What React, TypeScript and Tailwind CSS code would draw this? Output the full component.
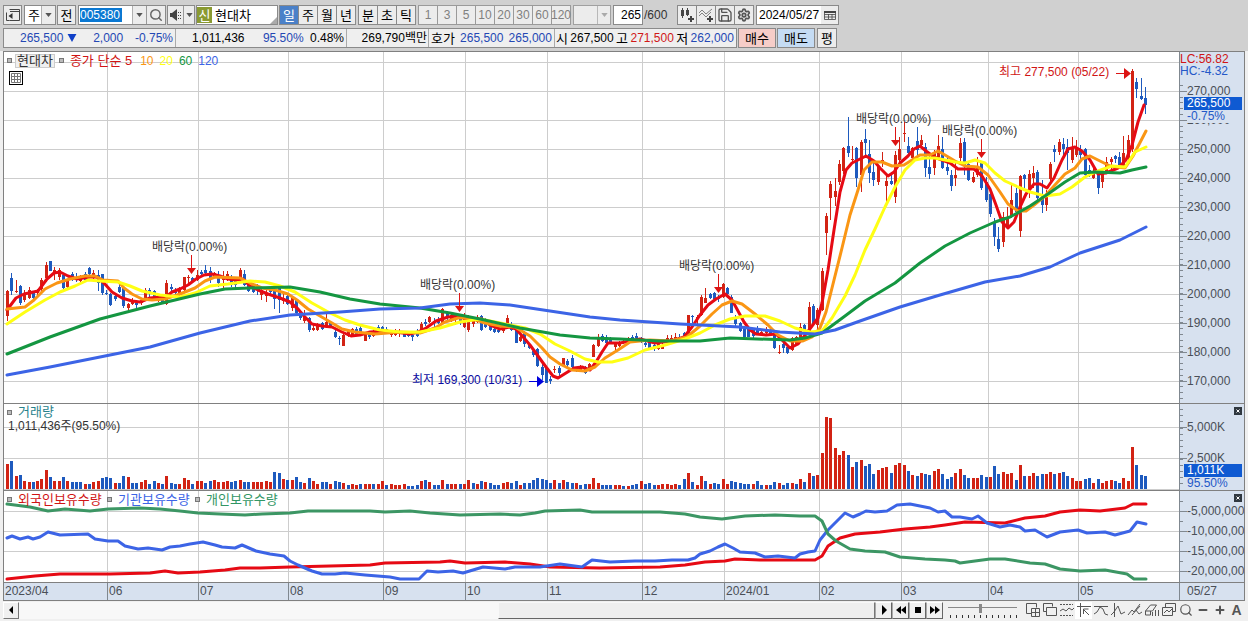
import type { ReactNode } from "react"
import { Search, Save, Settings, Minus, Plus } from "lucide-react"
import clsx from "clsx"

type Point = [number, number]
// direction (1 up, 0 down), high, body top, body bottom, low
type Candle = [number, number, number, number, number]

const RED = "#dc1414"
const CANDLE_RED = "#d22314"
const CANDLE_BLUE = "#1e5abe"
const LEFT = 4
const WIDTH = 1175
const FIRST_X = 7
const LAST_X = 1145

const months = [
  { label: "2023/04", x: 4 },
  { label: "06", x: 107 },
  { label: "07", x: 198 },
  { label: "08", x: 288 },
  { label: "09", x: 383 },
  { label: "10", x: 465 },
  { label: "11", x: 547 },
  { label: "12", x: 642 },
  { label: "2024/01", x: 724 },
  { label: "02", x: 819 },
  { label: "03", x: 901 },
  { label: "04", x: 988 },
  { label: "05", x: 1078 },
]

const priceLevels = [280, 270, 260, 250, 240, 230, 220, 210, 200, 190, 180, 170]
const priceY = (level: number) => Math.round(91 + (270 - level) * 2.895)

// positive = up day, negative = down day
const volumes = [
  25, -28, 13, -14, 8, 7, -7, 8, 10, 19, -12, 8, 8, -12, 8, -7, -7, -7, 5, -5, 7, 8, -11, -12, -11, 6, -6, -13, 12, -6,
  -6, 7, 9, -5, -8, 6, -5, 13, -6, -5, 5, 11, 9, -5, 8, 8, -6, -8, 9, 7, 7, 8, -7, -8, 9, -7, -7, 7, 7, 7, 8, 7, -17,
  -16, 10, -9, 9, -12, -7, 6, -11, 8, 5, -7, -7, 5, -8, -7, 6, -4, 5, 4, -5, 5, 5, -5, 5, 8, -4, 5, 4, 4, 5, -3, -3,
  -4, 8, -9, 7, -4, -4, 9, -5, 5, 5, -5, 5, 9, -6, 5, -8, 7, -6, -4, -4, 6, 7, -6, -8, 4, -6, -6, -9, -11, -10, -9,
  -6, 9, -6, 9, -7, -6, 6, -4, -5, 5, 11, 6, -4, -4, -4, 4, 4, -3, 3, -4, -5, 8, -5, -6, -4, 4, 5, 5, 4, 5, -4, -10,
  16, -7, 4, 13, -8, 5, -6, -5, 10, 5, -8, -7, -6, -5, -5, 5, -8, -4, 4, -4, -7, 6, -4, -6, 6, -5, 10, -7, 16, -13,
  14, 36, 72, 71, 41, 34, 38, -34, 22, -27, 29, -23, -25, -15, 19, 21, 22, -16, 24, 26, 24, -18, 14, -13, 16, -15,
  -14, 18, 20, -15, -10, -12, 16, 20, -14, -11, 11, 11, -14, -12, 12, -23, -15, 17, 15, 16, -9, 24, -13, 13, 16, -13,
  -15, 15, 17, -15, 16, -17, -13, 11, 8, 8, -10, -11, 6, -10, 6, 8, 9, -8, -6, 11, 8, 42, -24, -14, -13,
]

// candle values are thirds of a pixel below each base line
const before: Candle[] = [
  [1, 180, 183, 258, 272], [0, 130, 143, 183, 195], [1, 150, 182, 186, 190], [0, 165, 168, 218, 225],
  [1, 180, 188, 210, 215], [1, 170, 180, 205, 208], [0, 185, 190, 203, 215], [1, 176, 180, 190, 198],
  [1, 145, 150, 178, 190], [1, 97, 105, 145, 155], [0, 94, 94, 124, 124], [1, 110, 120, 130, 150],
  [1, 115, 120, 140, 150], [0, 130, 135, 175, 185], [1, 146, 150, 172, 175], [0, 125, 133, 150, 154],
  [0, 130, 142, 150, 156], [1, 135, 140, 152, 160], [0, 125, 132, 150, 154], [0, 112, 115, 132, 135],
  [1, 120, 128, 145, 148], [0, 120, 135, 158, 184], [0, 132, 133, 190, 194], [0, 180, 188, 191, 196],
  [0, 190, 193, 225, 228], [0, 195, 198, 208, 212], [0, 160, 170, 185, 190], [0, 168, 170, 228, 235],
  [1, 218, 222, 235, 250], [1, 205, 212, 222, 226], [0, 210, 220, 225, 240], [1, 210, 215, 220, 224],
  [1, 175, 180, 205, 207], [0, 175, 180, 190, 204], [0, 180, 183, 205, 212], [1, 193, 197, 212, 215],
  [0, 195, 205, 220, 223], [1, 150, 160, 222, 226], [0, 163, 172, 176, 188], [0, 175, 185, 190, 200],
  [1, 172, 180, 195, 198], [1, 140, 142, 180, 184], [1, 135, 142, 145, 160], [0, 140, 143, 155, 158],
  [1, 120, 134, 150, 154], [0, 120, 127, 132, 136], [0, 105, 120, 128, 132], [0, 110, 123, 150, 160],
  [1, 126, 130, 140, 144], [0, 122, 135, 158, 172], [1, 122, 142, 150, 180], [1, 122, 132, 150, 154],
  [0, 136, 140, 165, 172], [0, 145, 150, 165, 175], [1, 113, 120, 150, 153], [0, 120, 132, 165, 168],
  [0, 150, 155, 183, 187], [0, 160, 165, 185, 188], [0, 162, 170, 180, 195], [1, 175, 180, 195, 210],
  [1, 180, 190, 197, 215], [0, 175, 181, 186, 192], [0, 173, 178, 208, 238], [0, 165, 172, 210, 248],
  [1, 185, 205, 212, 222], [0, 194, 197, 222, 226], [1, 198, 205, 235, 242], [0, 205, 208, 250, 254],
  [0, 240, 245, 265, 270], [1, 240, 260, 272, 278], [0, 262, 265, 300, 305], [1, 280, 293, 300, 304],
  [1, 280, 285, 300, 303], [0, 276, 280, 297, 300], [1, 250, 275, 290, 294], [0, 274, 278, 292, 295],
  [0, 300, 307, 320, 325], [0, 318, 324, 328, 346], [1, 310, 315, 347, 348], [1, 298, 302, 318, 322],
  [1, 294, 298, 315, 318], [0, 290, 297, 312, 315], [0, 285, 295, 312, 315], [1, 306, 310, 332, 333],
  [0, 305, 312, 320, 328], [1, 296, 308, 318, 322], [0, 285, 290, 300, 304], [0, 288, 290, 303, 312],
  [0, 290, 297, 305, 308], [1, 300, 306, 315, 320], [1, 298, 308, 315, 318], [1, 298, 307, 312, 320],
  [0, 302, 305, 320, 322], [0, 305, 308, 318, 320], [0, 312, 316, 320, 332], [0, 296, 310, 318, 320],
  [1, 276, 282, 302, 305], [0, 268, 275, 283, 287], [1, 258, 262, 275, 280], [0, 265, 272, 276, 290],
  [0, 260, 270, 280, 283], [1, 235, 238, 280, 284], [0, 243, 248, 265, 270], [1, 250, 255, 270, 275],
  [1, 255, 265, 270, 284], [0, 258, 262, 278, 285], [1, 250, 255, 290, 293], [1, 256, 260, 300, 305],
  [1, 262, 265, 282, 290], [1, 255, 260, 275, 278], [0, 255, 257, 300, 303], [0, 265, 270, 290, 293],
  [0, 280, 285, 300, 303], [0, 290, 297, 305, 309], [0, 294, 300, 305, 310], [1, 286, 290, 302, 310],
  [1, 255, 265, 290, 292], [0, 276, 282, 300, 303], [0, 295, 298, 338, 340], [1, 315, 320, 332, 335],
  [0, 302, 310, 343, 350], [0, 340, 343, 353, 356], [0, 356, 362, 375, 382], [0, 355, 358, 408, 412],
  [0, 400, 412, 434, 450], [0, 412, 415, 458, 460], [0, 438, 448, 452, 462], [1, 408, 416, 420, 430],
  [0, 408, 415, 428, 440], [1, 383, 385, 408, 412], [0, 388, 392, 405, 412], [0, 375, 383, 412, 418],
  [0, 410, 415, 423, 426], [1, 404, 408, 423, 426], [0, 408, 412, 428, 432], [1, 398, 402, 415, 420],
  [1, 342, 345, 380, 382], [1, 312, 328, 348, 350], [0, 312, 318, 332, 336], [0, 315, 322, 338, 342],
  [0, 320, 325, 335, 342], [1, 336, 340, 352, 360], [1, 332, 336, 348, 350], [1, 326, 332, 340, 343],
  [1, 322, 328, 338, 342], [0, 314, 320, 330, 335], [0, 310, 318, 325, 335], [0, 322, 325, 335, 340],
  [0, 330, 338, 345, 350], [0, 330, 335, 355, 357], [0, 342, 345, 356, 362], [1, 340, 343, 358, 360],
  [1, 335, 345, 356, 358], [1, 316, 325, 335, 340], [1, 316, 325, 330, 338], [1, 310, 320, 330, 335],
  [0, 312, 320, 330, 335], [0, 305, 308, 325, 328], [1, 254, 256, 318, 320], [0, 254, 258, 262, 280],
  [1, 254, 260, 268, 285], [1, 195, 200, 256, 258], [1, 175, 205, 218, 220], [0, 188, 192, 203, 207],
  [0, 186, 190, 207, 212], [0, 195, 202, 206, 216], [1, 160, 163, 200, 204], [0, 170, 174, 192, 200],
  [0, 196, 200, 248, 250], [0, 255, 260, 282, 288], [0, 276, 280, 303, 306], [0, 288, 292, 320, 322],
  [0, 290, 294, 320, 322], [0, 295, 300, 318, 324], [0, 288, 298, 312, 315], [1, 296, 305, 315, 318],
  [1, 290, 296, 308, 312], [0, 295, 300, 312, 316], [0, 308, 312, 353, 358], [1, 345, 366, 368, 372],
  [0, 335, 342, 353, 368], [0, 345, 350, 370, 373], [1, 322, 325, 360, 362], [1, 318, 322, 345, 348],
  [1, 278, 290, 330, 333], [0, 282, 285, 303, 306], [1, 216, 230, 305, 308], [0, 222, 227, 283, 288],
  [1, 235, 240, 285, 298], [1, 114, 122, 240, 242],
]

const after: Candle[] = [
  [1, 460, 467, 518, 585], [1, 362, 372, 413, 480], [1, 355, 392, 410, 438], [1, 300, 312, 365, 375],
  [1, 262, 265, 332, 342], [0, 172, 258, 278, 290], [1, 258, 298, 301, 310], [0, 262, 265, 355, 380],
  [1, 240, 245, 345, 395], [0, 208, 237, 248, 285], [0, 240, 282, 340, 370], [0, 310, 335, 360, 377],
  [1, 315, 322, 365, 375], [1, 275, 300, 304, 320], [1, 345, 362, 377, 430], [0, 345, 362, 371, 376],
  [1, 272, 285, 410, 430], [1, 230, 267, 300, 318], [1, 185, 218, 221, 245], [0, 230, 257, 280, 290],
  [1, 260, 265, 295, 305], [0, 200, 243, 270, 290], [1, 225, 240, 255, 258], [0, 250, 260, 325, 352],
  [0, 285, 322, 342, 356], [1, 270, 280, 325, 345], [1, 225, 257, 290, 300], [0, 230, 268, 325, 328],
  [0, 290, 322, 333, 345], [0, 330, 345, 378, 392], [1, 310, 345, 355, 378], [1, 235, 250, 295, 310],
  [0, 235, 247, 318, 345], [0, 305, 313, 360, 363], [1, 335, 352, 366, 370], [1, 290, 318, 345, 352],
  [0, 303, 305, 383, 390], [0, 350, 365, 420, 425], [0, 396, 403, 463, 470], [0, 475, 485, 530, 558],
  [0, 500, 538, 567, 577], [1, 455, 470, 545, 560], [1, 440, 475, 500, 505], [1, 375, 420, 468, 475],
  [0, 385, 400, 455, 460], [1, 345, 347, 512, 530], [0, 342, 345, 358, 385], [1, 330, 342, 390, 415],
  [1, 318, 338, 355, 385], [0, 330, 337, 413, 420], [0, 360, 405, 435, 460], [1, 390, 402, 435, 452],
  [1, 305, 312, 357, 362], [0, 255, 267, 275, 305], [1, 238, 247, 275, 285], [0, 235, 253, 268, 290],
  [0, 238, 262, 278, 330], [1, 230, 262, 300, 310], [1, 240, 265, 285, 290], [0, 255, 268, 285, 300],
  [0, 265, 268, 345, 350], [0, 315, 330, 345, 350], [1, 320, 337, 355, 358], [0, 335, 345, 383, 402],
  [1, 330, 340, 365, 383], [1, 290, 305, 335, 340], [1, 290, 298, 306, 335], [0, 285, 288, 296, 310],
  [0, 275, 292, 322, 325], [1, 228, 280, 320, 325], [1, 225, 240, 295, 300], [1, 28, 33, 268, 275],
  [0, 55, 65, 88, 115], [0, 55, 107, 117, 120], [0, 82, 115, 135, 163],
]

const candles = [
  ...before.map(([up, ...ys]) => ({ up: up === 1, ys: ys.map((y) => Math.round(230 + y / 3)) })),
  ...after.map(([up, ...ys]) => ({ up: up === 1, ys: ys.map((y) => Math.round(60 + y / 3)) })),
]

const ma5: Point[] = [
  [7, 310], [16, 298], [24, 294], [38, 291], [47, 279], [54, 273], [60, 272], [68, 276], [77, 279], [90, 277], [97, 277],
  [104, 283], [112, 292], [122, 298], [132, 301], [140, 302], [150, 298], [160, 297], [166, 297], [172, 292], [180, 289],
  [188, 285], [196, 279], [204, 275], [212, 274], [220, 276], [228, 279], [236, 280], [243, 279], [250, 286], [258, 290],
  [268, 294], [280, 298], [290, 302], [298, 309], [304, 316], [312, 324], [322, 326], [332, 327], [342, 332], [351, 336],
  [360, 335], [370, 332], [384, 331], [395, 332], [410, 334], [418, 332], [426, 328], [436, 321], [448, 317], [458, 316],
  [470, 320], [482, 319], [490, 325], [500, 329], [510, 327], [516, 329], [524, 338], [530, 345], [538, 356], [546, 367],
  [553, 376], [558, 378], [566, 373], [574, 368], [582, 367], [590, 370], [596, 362], [602, 352], [608, 343], [620, 343],
  [640, 339], [655, 343], [672, 341], [684, 337], [692, 327], [700, 315], [708, 305], [716, 299], [725, 294], [732, 300],
  [738, 311], [744, 322], [750, 330], [756, 334], [766, 335], [776, 334], [782, 340], [790, 348], [798, 344], [806, 334],
  [812, 326], [818, 318], [822, 303], [828, 270], [834, 230], [840, 192], [846, 170], [852, 163], [858, 160], [866, 156],
  [874, 161], [880, 168], [888, 176], [894, 172], [900, 163], [908, 156], [914, 149], [920, 146], [926, 151], [934, 157],
  [942, 160], [950, 163], [958, 169], [974, 169], [982, 176], [990, 189], [996, 205], [1002, 222], [1008, 228],
  [1014, 222], [1020, 207], [1026, 194], [1034, 184], [1040, 184], [1047, 188], [1054, 178], [1062, 160], [1068, 149],
  [1075, 147], [1082, 151], [1090, 160], [1098, 174], [1106, 173], [1118, 168], [1126, 160], [1132, 145], [1138, 122],
  [1144, 105],
]
const ma10: Point[] = [
  [7, 309], [25, 307], [34, 300], [45, 289], [57, 283], [70, 279], [85, 276], [95, 276], [103, 280], [118, 281],
  [124, 288], [132, 294], [142, 299], [152, 300], [165, 299], [180, 294], [195, 288], [205, 281], [215, 277], [240, 278],
  [250, 283], [262, 288], [275, 290], [288, 294], [297, 300], [308, 309], [320, 316], [332, 323], [342, 329], [355, 332],
  [375, 334], [400, 332], [420, 333], [435, 328], [445, 322], [458, 318], [470, 318], [485, 323], [500, 326], [515, 327],
  [530, 336], [542, 348], [550, 357], [560, 364], [572, 370], [585, 371], [595, 367], [605, 358], [618, 350], [630, 342],
  [650, 340], [670, 341], [687, 337], [700, 326], [712, 314], [722, 305], [732, 301], [742, 304], [755, 314], [768, 325],
  [778, 335], [790, 341], [803, 341], [812, 337], [820, 328], [826, 312], [834, 280], [842, 248], [850, 215], [858, 190],
  [864, 170], [872, 162], [882, 162], [892, 166], [904, 165], [912, 160], [920, 155], [930, 155], [938, 151], [945, 155],
  [955, 161], [965, 166], [978, 167], [988, 175], [1000, 192], [1008, 204], [1018, 211], [1026, 211], [1034, 205],
  [1045, 196], [1054, 186], [1065, 174], [1075, 168], [1082, 159], [1090, 156], [1100, 161], [1110, 166], [1125, 168],
  [1133, 156], [1146, 131],
]
const ma20: Point[] = [
  [7, 324], [25, 312], [45, 300], [60, 292], [75, 286], [88, 280], [100, 281], [118, 282], [130, 286], [142, 291],
  [160, 295], [180, 297], [195, 293], [210, 286], [228, 284], [250, 281], [265, 282], [280, 286], [295, 292], [312, 303],
  [330, 313], [345, 320], [360, 325], [380, 330], [400, 332], [420, 332], [440, 328], [460, 322], [480, 319], [505, 324],
  [525, 328], [540, 334], [555, 344], [570, 351], [585, 359], [598, 362], [612, 362], [628, 358], [645, 350], [665, 345],
  [685, 339], [700, 333], [715, 325], [730, 319], [745, 316], [765, 316], [780, 321], [795, 328], [810, 332], [822, 331],
  [832, 318], [845, 296], [855, 275], [865, 250], [875, 229], [885, 207], [895, 187], [905, 170], [915, 160], [925, 158],
  [935, 158], [945, 160], [955, 162], [965, 163], [975, 160], [985, 163], [995, 173], [1005, 181], [1018, 187],
  [1030, 192], [1045, 196], [1060, 194], [1072, 187], [1085, 177], [1098, 171], [1112, 166], [1125, 167], [1135, 152],
  [1146, 147],
]
const ma60: Point[] = [
  [7, 354], [50, 337], [100, 319], [150, 306], [200, 294], [225, 289], [250, 288], [290, 287], [320, 292], [350, 299],
  [380, 304], [420, 308], [450, 313], [480, 319], [520, 328], [560, 335], [590, 338], [620, 339], [660, 341], [700, 341],
  [730, 338], [790, 340], [805, 338], [822, 333], [845, 316], [865, 301], [895, 283], [920, 263], [945, 246], [970, 233],
  [995, 222], [1010, 217], [1030, 206], [1048, 194], [1065, 182], [1080, 173], [1095, 172], [1120, 173], [1132, 170],
  [1146, 167],
]
const ma120: Point[] = [
  [7, 375], [50, 367], [100, 357], [150, 347], [200, 333], [250, 321], [290, 315], [340, 312], [380, 309], [420, 308],
  [450, 304], [480, 303], [510, 305], [550, 311], [590, 317], [620, 320], [680, 324], [740, 327], [780, 332], [815, 334],
  [835, 330], [860, 321], [900, 307], [940, 295], [985, 282], [1020, 276], [1050, 267], [1080, 253], [1120, 240],
  [1146, 227],
]

const foreignHeld: Point[] = [
  [7, 579], [35, 576], [60, 574], [110, 574], [150, 573], [165, 571], [178, 573], [200, 572], [225, 570], [240, 568],
  [260, 568], [290, 567], [330, 566], [370, 565], [385, 563], [440, 562], [450, 561], [465, 563], [505, 562], [530, 564],
  [550, 567], [600, 568], [660, 567], [685, 565], [705, 562], [725, 561], [735, 559], [760, 560], [815, 560], [822, 556],
  [828, 546], [840, 538], [855, 534], [880, 532], [905, 529], [930, 527], [945, 525], [965, 522], [1005, 523],
  [1025, 518], [1045, 516], [1060, 512], [1080, 510], [1100, 511], [1125, 508], [1133, 504], [1146, 504],
]
const institutionHeld: Point[] = [
  [7, 538], [12, 536], [20, 539], [28, 537], [33, 539], [40, 537], [48, 532], [60, 535], [88, 534], [95, 539],
  [108, 541], [118, 541], [125, 546], [138, 549], [148, 548], [162, 550], [170, 547], [180, 546], [190, 544], [203, 542],
  [215, 545], [222, 547], [235, 548], [242, 545], [256, 551], [270, 554], [284, 556], [290, 561], [298, 565], [312, 571],
  [322, 574], [335, 574], [345, 573], [365, 575], [390, 577], [400, 579], [419, 579], [427, 571], [438, 572], [453, 571],
  [463, 573], [483, 567], [505, 569], [515, 567], [540, 567], [560, 564], [582, 567], [592, 560], [610, 562], [635, 561],
  [655, 561], [672, 560], [688, 560], [695, 558], [700, 554], [710, 551], [718, 547], [725, 544], [733, 548], [740, 552],
  [755, 553], [765, 557], [778, 556], [795, 558], [800, 554], [808, 552], [815, 551], [820, 540], [828, 530], [838, 520],
  [845, 513], [853, 517], [860, 514], [866, 511], [875, 512], [887, 511], [897, 505], [910, 504], [920, 506], [930, 508],
  [938, 512], [945, 511], [952, 517], [960, 517], [972, 519], [978, 516], [987, 523], [1000, 527], [1010, 525],
  [1020, 527], [1025, 531], [1035, 530], [1047, 537], [1060, 532], [1078, 530], [1087, 533], [1105, 532], [1115, 535],
  [1130, 531], [1137, 522], [1146, 524],
]
const personalHeld: Point[] = [
  [7, 504], [30, 507], [48, 511], [65, 509], [90, 511], [108, 509], [140, 508], [160, 509], [180, 511], [198, 513],
  [220, 514], [245, 515], [262, 514], [290, 513], [308, 511], [370, 511], [385, 512], [410, 511], [430, 513], [460, 515],
  [500, 514], [520, 515], [535, 513], [545, 511], [580, 510], [592, 512], [660, 512], [685, 514], [700, 517], [722, 519],
  [745, 516], [775, 515], [800, 516], [815, 516], [822, 521], [828, 534], [836, 541], [850, 549], [865, 551], [885, 552],
  [900, 557], [925, 559], [945, 560], [955, 561], [960, 563], [975, 561], [990, 559], [1005, 559], [1030, 563],
  [1045, 564], [1060, 569], [1080, 571], [1105, 570], [1127, 574], [1134, 579], [1146, 579],
]

const notes = [
  { text: "배당락(0.00%)", x: 152, y: 247, color: "text-[#333]" },
  { text: "배당락(0.00%)", x: 420, y: 285, color: "text-[#333]" },
  { text: "배당락(0.00%)", x: 679, y: 266, color: "text-[#333]" },
  { text: "배당락(0.00%)", x: 856, y: 119, color: "text-[#333]" },
  { text: "배당락(0.00%)", x: 942, y: 131, color: "text-[#333]" },
  { text: "최고 277,500 (05/22)", x: 999, y: 72, color: "text-[#d01414]" },
  { text: "최저 169,300 (10/31)", x: 412, y: 380, color: "text-[#0a0aa0]" },
]

const dividendArrows: Point[] = [[191, 274], [459, 312], [718, 293], [895, 146], [981, 158]]

const barX = (i: number, count: number) => Math.round(FIRST_X + (i * (LAST_X - FIRST_X)) / (count - 1))
const percentX = (x: number) => `${((x - LEFT) / WIDTH) * 100}%`
const toPoints = (points: Point[]) => points.map((p) => p.join(",")).join(" ")

function Line({ points, color }: { points: Point[]; color: string }) {
  return <polyline points={toPoints(points)} fill="none" stroke={color} strokeWidth={3} strokeLinejoin="round" strokeLinecap="round" />
}

interface PlotProps {
  top: number
  height: number
  levels: number[]
  children: ReactNode
}

function Plot({ top, height, levels, children }: PlotProps) {
  return (
    <svg
      className="block h-full w-full"
      viewBox={`${LEFT} ${top} ${WIDTH} ${height}`}
      preserveAspectRatio="none"
      aria-hidden="true"
    >
      <g fill="#cdcdcd">
        {levels.map((y) => (
          <rect key={y} x={LEFT} y={y} width={WIDTH} height={1} />
        ))}
        {months.slice(1).map((m) => (
          <rect key={m.x} x={m.x} y={top} width={1} height={height} />
        ))}
      </g>
      {children}
    </svg>
  )
}

interface ScaleProps {
  top: number
  labels: { text: string; y: number }[]
  minor: number
  start: number
  end: number
  children?: ReactNode
}

function Scale({ top, labels, minor, start, end, children }: ScaleProps) {
  const ticks: number[] = []
  for (let y = start; y < end; y += minor) ticks.push(Math.round(y) - top)
  return (
    <div className="relative w-[65px] shrink-0 overflow-hidden border-l border-[#808890] bg-[#d7e1ef]">
      {ticks.map((y) => (
        <span key={y} className="absolute left-0 h-px w-[3px] bg-[#808890]" style={{ top: y }} />
      ))}
      {labels.map((l) => (
        <div key={l.text} className="absolute left-0 flex h-[14px] items-center" style={{ top: l.y - top - 7 }}>
          <span className="h-px w-[7px] bg-[#808890]" />
          <span className="whitespace-nowrap text-[12px] leading-[14px] text-[#4a4f57]">{l.text}</span>
        </div>
      ))}
      {children}
    </div>
  )
}

function CloseBox({ label }: { label: string }) {
  return (
    <button aria-label={label} className="absolute top-[3px] right-[2px] flex size-2 items-center justify-center bg-[#303840]">
      <svg viewBox="0 0 8 8" className="size-2" stroke="#fff" strokeWidth={1}>
        <path d="M2.5 2.5l3 3M5.5 2.5l-3 3" />
      </svg>
    </button>
  )
}

function Marker() {
  return <span className="size-[5px] shrink-0 border border-[#777] bg-[#bbb]" />
}

function Caret({ muted = false }: { muted?: boolean }) {
  return (
    <svg viewBox="0 0 8 5" className={clsx("pointer-events-none h-[4px] w-[7px]", muted ? "fill-[#aaa]" : "fill-[#555]")}>
      <path d="M0 0h8L4 5z" />
    </svg>
  )
}

interface ToolButtonProps {
  children: ReactNode
  label?: string
  className?: string
}

function ToolButton({ children, label, className }: ToolButtonProps) {
  return (
    <button
      aria-label={label}
      className={clsx("flex h-5 shrink-0 items-center justify-center border border-[#8a8a8a] text-[13px] leading-none", className)}
    >
      {children}
    </button>
  )
}

function Toolbar() {
  return (
    <div className="flex h-5 items-center">
      <ToolButton label="창 열기" className="w-[19px] bg-[#ececec]">
        <svg viewBox="0 0 16 16" className="size-4" fill="none" stroke="#444">
          <path d="M4.5 2.5h10v11h-10M5 4.5h9" />
          <path d="M1.5 5.5v8h3" />
          <path d="M7.5 6v6L3.5 9z" fill="#333" stroke="none" />
        </svg>
      </ToolButton>
      <div className="relative ml-[2px] flex h-5 w-8 border border-[#8a8a8a] bg-white">
        <select aria-label="구분" className="w-full appearance-none bg-transparent pl-[3px] text-[13px] leading-none outline-none">
          <option>주</option>
        </select>
        <span className="pointer-events-none absolute top-0 right-0 flex h-full w-[14px] items-center justify-center border-l border-[#b0b0b0] bg-[#ececec]">
          <Caret />
        </span>
      </div>
      <ToolButton className="ml-px w-[19px] bg-[#ececec]">전</ToolButton>

      <div className="ml-[2px] flex h-5 w-[88px] border border-[#8a8a8a] bg-white">
        <div className="flex w-[53px] items-center pl-px">
          <input
            aria-label="종목코드"
            defaultValue="005380"
            className="h-[14px] w-[42px] bg-[#0a78d2] text-[12px] leading-[14px] text-white outline-none"
          />
        </div>
        <button aria-label="종목 목록" className="flex w-[14px] items-center justify-center border-l border-[#b0b0b0] bg-[#ececec]">
          <Caret />
        </button>
        <button aria-label="종목 검색" className="flex w-[19px] items-center justify-center border-l border-[#999] bg-[#ececec]">
          <Search className="size-[14px] shrink-0 text-[#666]" strokeWidth={2.5} />
        </button>
      </div>

      <div className="ml-px flex h-5 w-7 border border-[#8a8a8a] bg-[#ececec]">
        <button aria-label="소리" className="flex w-4 items-center justify-center">
          <svg viewBox="0 0 14 14" className="size-[14px]" fill="#444">
            <path d="M1 5h2l5-4v12L3 9H1z" />
            <path d="M9 4h1v1H9zM9 7h1v1H9zM9 10h1v1H9zM11 4h1v1h-1zM11 7h1v1h-1zM11 10h1v1h-1z" />
          </svg>
        </button>
        <button aria-label="소리 설정" className="flex w-[11px] items-center justify-center border-l border-[#999]">
          <Caret />
        </button>
      </div>

      <div className="relative ml-px flex h-5 w-[82px] items-center border border-[#8a8a8a] bg-white">
        <span className="flex h-4 w-[15px] items-center justify-center bg-[#8a9a32] text-[13px] leading-none text-white">신</span>
        <span className="pl-[3px] text-[13px] leading-none">현대차</span>
        <span className="absolute right-0 bottom-0 border-b-[7px] border-l-[7px] border-b-[#aaa] border-l-transparent" />
      </div>

      <div className="ml-px flex">
        {["일", "주", "월", "년"].map((t, i) => (
          <ToolButton key={t} className={clsx("-mr-px w-5", i === 0 ? "bg-[#4a80c8] text-white" : "bg-[#ececec]")}>
            {t}
          </ToolButton>
        ))}
      </div>
      <div className="ml-[3px] flex">
        {["분", "초", "틱"].map((t) => (
          <ToolButton key={t} className="-mr-px w-5 bg-[#ececec]">{t}</ToolButton>
        ))}
      </div>
      <div className="ml-[3px] flex">
        {["1", "3", "5", "10", "20", "30", "60", "120"].map((t) => (
          <button
            key={t}
            className="-mr-px flex h-5 w-5 items-center justify-center border border-[#9a9a9a] bg-[#ececec] text-[12px] leading-none text-[#808080]"
          >
            {t}
          </button>
        ))}
      </div>

      <div className="relative ml-[3px] h-5 w-[38px] border border-[#a0a0a0] bg-[#ececec]">
        <select aria-label="사용자 주기" disabled className="size-full appearance-none" />
        <span className="pointer-events-none absolute top-0 right-0 flex h-full w-[13px] items-center justify-center border-l border-[#b8b8b8]">
          <Caret muted />
        </span>
      </div>
      <input
        aria-label="표시 개수"
        defaultValue="265"
        className="ml-[2px] h-5 w-[30px] border border-[#8a8a8a] bg-white pr-px text-right text-[12px] outline-none"
      />
      <span className="w-[34px] pl-px text-[12px] text-[#333]">/600</span>

      <div className="flex">
        <ToolButton label="종목 추가" className="-mr-px w-5 bg-[#ececec]">
          <svg viewBox="0 0 16 16" className="size-4" fill="#444">
            <path d="M3 1h1v2h1v6H4v2H3V9H2V3h1zM8 1h1v2h1v5H9v1H8V8H7V3h1z" />
            <path d="M11 9h2v2h2v2h-2v2h-2v-2H9v-2h2z" />
          </svg>
        </ToolButton>
        <ToolButton label="지표 추가" className="-mr-px w-5 bg-[#ececec]">
          <svg viewBox="0 0 16 16" className="size-4" fill="none" stroke="#666">
            <path d="M1 6l3-3 4 4 6-5M1 9l3-3 4 4 5-5" strokeWidth={0.8} />
            <path d="M11 9h2v2h2v2h-2v2h-2v-2H9v-2h2z" fill="#444" stroke="none" />
          </svg>
        </ToolButton>
        <ToolButton label="저장" className="-mr-px w-5 bg-[#ececec]">
          <Save className="size-4 shrink-0 text-[#555]" strokeWidth={2} />
        </ToolButton>
        <ToolButton label="설정" className="w-5 bg-[#ececec]">
          <Settings className="size-[14px] shrink-0 text-[#555]" strokeWidth={3} />
        </ToolButton>
      </div>

      <div className="ml-[2px] flex h-5 w-[83px] border border-[#8a8a8a] bg-white">
        <input aria-label="기준일" defaultValue="2024/05/27" className="w-16 pl-[2px] text-[12px] outline-none" />
        <button aria-label="달력" className="flex flex-1 items-center justify-center bg-[#ececec]">
          <svg viewBox="0 0 12 10" className="h-[10px] w-3" fill="none" stroke="#444">
            <path d="M.5 1.5h11v8H.5zM.5 4.5h11M4.5 4v5M8 4v5M.5 7h11" strokeWidth={0.8} />
            <path d="M0 1h12v2H0z" fill="#444" stroke="none" />
          </svg>
        </button>
      </div>
    </div>
  )
}

function QuoteBar() {
  return (
    <div className="mt-[3px] flex h-5 items-center text-[12px] leading-none text-black">
      <div className="flex h-5 w-[734px] items-center border border-[#8a8a8a] bg-[#efefef] *:flex *:h-full *:items-center *:whitespace-nowrap">
        <div className="w-[172px] justify-between border-r border-[#aaa] pr-[2px] pl-4 text-[#2448b4]">
          <span className="flex items-center gap-1">
            265,500
            <svg viewBox="0 0 10 9" className="h-2 w-[10px] fill-[#1040c8]"><path d="M0 0h10L5 9z" /></svg>
          </span>
          <span className="pl-1">2,000</span>
          <span>-0.75%</span>
        </div>
        <div className="w-[171px] justify-between border-r border-[#aaa] pr-[2px] pl-4">
          <span>1,011,436</span>
          <span className="pl-3 text-[#2448b4]">95.50%</span>
          <span>0.48%</span>
        </div>
        <div className="w-[82px] justify-end border-r border-[#aaa] pr-px">
          <span>269,790백만</span>
        </div>
        <div className="w-[126px] justify-between border-r border-[#aaa] px-[2px] text-[#2448b4]">
          <span className="text-[13px] text-black">호가</span>
          <span>265,500</span>
          <span>265,000</span>
        </div>
        <div className="flex-1 justify-between pr-[2px] pl-px">
          <span className="text-[13px]">시</span>
          <span>267,500</span>
          <span className="text-[13px]">고</span>
          <span className="text-[#d01818]">271,500</span>
          <span className="text-[13px]">저</span>
          <span className="text-[#2448b4]">262,000</span>
        </div>
      </div>
      <ToolButton className="ml-px w-[38px] bg-[#f6cdc8]">매수</ToolButton>
      <ToolButton className="ml-px w-[38px] bg-[#c5dcf4]">매도</ToolButton>
      <ToolButton className="ml-[2px] w-5 bg-[#ececec]">평</ToolButton>
    </div>
  )
}

function PricePane() {
  return (
    <div className="flex h-[352px] border-b border-[#808080]">
      <div className="relative min-w-0 flex-1">
        <Plot top={52} height={351} levels={priceLevels.map(priceY)}>
          <g shapeRendering="crispEdges">
            {candles.map(({ up, ys: [high, top, bottom, low] }, i) => {
              const x = barX(i, candles.length)
              return (
                <g key={i} fill={up ? CANDLE_RED : CANDLE_BLUE}>
                  <rect x={x} y={high} width={1} height={Math.max(low - high, 1)} />
                  <rect x={x - 1} y={top} width={3} height={Math.max(bottom - top, 1)} />
                </g>
              )
            })}
          </g>
          <Line points={ma5} color="#e60a14" />
          <Line points={ma10} color="#fa9614" />
          <Line points={ma20} color="#ffff14" />
          <Line points={ma60} color="#149641" />
          <Line points={ma120} color="#3c64e6" />
          {dividendArrows.map(([x, y]) => (
            <path key={x} d={`M${x} ${y - 19}h1v13h4l-4.5 6l-4.5-6h4z`} fill={RED} />
          ))}
          <path d="M1116 73h8v-5l7 5.5l-7 5.5v-5h-8z" fill={RED} />
          <path d="M529 381h8v-5l7 5.5l-7 5.5v-5h-8z" fill="#0000dc" />
        </Plot>
        {notes.map((n) => (
          <span
            key={n.x}
            className={clsx("absolute text-[12px] leading-[14px] whitespace-nowrap", n.color)}
            style={{ left: percentX(n.x), top: n.y - 59 }}
          >
            {n.text}
          </span>
        ))}
        <div className="absolute top-px left-[3px] flex h-[15px] items-center gap-1 text-[12px] leading-none text-[#d01414]">
          <Marker />
          <span className="-ml-px flex h-[14px] items-center border border-[#ccc] bg-[#efefef] px-px text-[13px] text-[#333]">현대차</span>
          <Marker />
          <span className="pl-[2px] text-[13px]">종가 단순 5</span>
          <span className="pl-1 text-[#fa9614]">10</span>
          <span className="pl-[2px] text-[#ffff14]">20</span>
          <span className="pl-[2px] text-[#149641]">60</span>
          <span className="pl-[2px] text-[#3c64e6]">120</span>
        </div>
        <button aria-label="표 보기" className="absolute top-[19px] left-[5px] flex size-[14px] items-center justify-center border border-black bg-white">
          <svg viewBox="0 0 10 10" className="size-[10px]" fill="none" stroke="#777">
            <path d="M.5.5h9v9h-9zM.5 3.5h9M.5 6.5h9M3.5.5v9M6.5.5v9" />
          </svg>
        </button>
      </div>
      <Scale
        top={52}
        minor={5.79}
        start={85}
        end={400}
        labels={priceLevels.slice(1).map((p) => ({ text: `${p},000`, y: priceY(p) }))}
      >
        <div className="absolute top-px left-0 text-[12px] leading-[12px]">
          <div className="text-[#d01414]">LC:56.82</div>
          <div className="text-[#2458c8]">HC:-4.32</div>
        </div>
        <div className="absolute top-[45px] right-[2px] left-[4px] bg-[#0f5ad2] pl-[3px] text-[12px] leading-[13px] text-white">265,500</div>
        <div className="absolute top-[58px] left-[7px] w-[50px] bg-[#d7e1ef] text-[12px] leading-[13px] text-[#2458c8]">-0.75%</div>
      </Scale>
    </div>
  )
}

function VolumePane() {
  return (
    <div className="flex h-[87px] border-b border-[#808080]">
      <div className="relative min-w-0 flex-1">
        <Plot top={404} height={86} levels={[427, 458, 489]}>
          <g shapeRendering="crispEdges">
            {volumes.map((v, i) => (
              <rect
                key={i}
                x={barX(i, volumes.length) - 1}
                y={489 - Math.abs(v)}
                width={3}
                height={Math.abs(v)}
                fill={v > 0 ? CANDLE_RED : CANDLE_BLUE}
              />
            ))}
          </g>
        </Plot>
        <div className="absolute top-px left-[3px] text-[12px] leading-[14px]">
          <div className="flex items-center gap-[6px] text-[13px] text-[#28828c]">
            <Marker />
            거래량
          </div>
          <div className="pl-px text-[#333]">1,011,436주(95.50%)</div>
        </div>
      </div>
      <Scale top={404} minor={6.2} start={409} end={489} labels={[{ text: "5,000K", y: 427 }, { text: "2,500K", y: 458 }]}>
        <CloseBox label="거래량 닫기" />
        <div className="absolute top-[60px] right-[2px] left-[4px] bg-[#0f5ad2] pl-[3px] text-[12px] leading-[13px] text-white">1,011K</div>
        <div className="absolute top-[73px] left-[7px] text-[12px] leading-[12px] text-[#2458c8]">95.50%</div>
      </Scale>
    </div>
  )
}

function HoldingsPane() {
  return (
    <div className="flex h-[92px] border-b border-[#808080]">
      <div className="relative min-w-0 flex-1">
        <Plot top={491} height={91} levels={[511, 531, 551, 571]}>
          <Line points={foreignHeld} color="#e60a14" />
          <Line points={institutionHeld} color="#3c64e6" />
          <Line points={personalHeld} color="#3c9664" />
        </Plot>
        <div className="absolute top-[2px] left-[3px] flex items-center text-[13px] leading-[13px]">
          <Marker />
          <span className="w-[95px] pl-[6px] text-[#d01414]">외국인보유수량</span>
          <Marker />
          <span className="w-[83px] pl-[6px] text-[#3c64e6]">기관보유수량</span>
          <Marker />
          <span className="pl-[6px] text-[#329664]">개인보유수량</span>
        </div>
      </div>
      <Scale
        top={491}
        minor={10}
        start={501}
        end={580}
        labels={[
          { text: "-5,000,000", y: 511 },
          { text: "-10,000,00", y: 531 },
          { text: "-15,000,00", y: 551 },
          { text: "-20,000,00", y: 571 },
        ]}
      >
        <CloseBox label="보유수량 닫기" />
      </Scale>
    </div>
  )
}

function DateAxis() {
  return (
    <div className="flex h-[17px] bg-[#d7e1ef] text-[12px] leading-[16px] text-[#4a4f57]">
      <div className="relative min-w-0 flex-1">
        {months.map((m, i) => (
          <span
            key={m.label}
            className={clsx("absolute top-0 h-full pl-px", i > 0 && "border-l border-[#808890]")}
            style={{ left: percentX(m.x) }}
          >
            {m.label}
          </span>
        ))}
      </div>
      <div className="w-[65px] shrink-0 border-l border-[#808890] pl-[7px]">05/27</div>
    </div>
  )
}

const playback = [
  { label: "재생", d: "M6 3l5 5-5 5z" },
  { label: "뒤로", d: "M8 4v8L3 8zM13 4v8L8 8z" },
  { label: "정지", d: "M5 5h6v6H5z" },
  { label: "앞으로", d: "M3 4v8l5-4zM8 4v8l5-4z" },
]

const drawTools = [
  { label: "창 추가", d: "M6.5 11.5h-5v-10h10v4M6.5 6.5h8v8h-8zM6.5 10.5h8M10.5 6.5v8" },
  { label: "창 겹치기", d: "M4.5 9.5h-3v-8h9v3M4.5 5.5h10v8h-10z" },
  { label: "격자", d: "M1 2.5h2m1 0h2m1 0h2m1 0h2m1 0h1M1 13.5h2m1 0h2m1 0h2m1 0h2m1 0h1M1 9l3-2 3 2 3-3 3 2 2-2" },
  { label: "십자선", d: "M4.5 1v14M1 4.5h14M7 7l6 6M7.5 12V7h5" },
  { label: "추세선", d: "M1 4.5h14M1 12l3-2 3-5 3 2 2 5 3 1" },
  { label: "수직선", d: "M4.5 1v14M1 13l3-3 4-6 3 8 4-2" },
  { label: "그리기", d: "M1 13l4-5 2 2 6-8M5 13l8-9M9 8l3 4 3-2" },
  { label: "모두 지우기", d: "M1.5 9l5-6h6l-4 6zM1.5 9v4h5V9M8.5 14v-4M11.5 14V8M14.5 14V8" },
  { label: "차트 겹치기", d: "M4.5 5v-3.500h10v8h-3M1.5 5.5h10v8h-10zM3 11l3-3 2 2 3-3" },
]

function BottomBar() {
  return (
    <div className="flex h-[18px] items-center bg-[#f0f0f0] pr-[3px]">
      <button aria-label="왼쪽으로" className="flex h-[17px] w-4 shrink-0 items-center justify-center border border-t-white border-r-[#777] border-b-[#777] border-l-white bg-[#f0f0f0]">
        <svg viewBox="0 0 8 8" className="size-2"><path d="M6 0v8L2 4z" /></svg>
      </button>
      <div className="flex h-[17px] flex-1 bg-[#f8f8f8]">
        <div className="w-[56%]" />
        <div className="flex-1 border border-t-[#f8f8f8] border-r-[#777] border-b-[#666] border-l-[#f8f8f8] bg-[#efefef]" />
      </div>
      {playback.map((p) => (
        <button key={p.label} aria-label={p.label} className="flex h-[17px] w-[17px] shrink-0 items-center justify-center border border-t-white border-r-[#666] border-b-[#666] border-l-[#aaa] bg-[#f0f0f0]">
          <svg viewBox="0 0 16 16" className="size-4 shrink-0"><path d={p.d} /></svg>
        </button>
      ))}
      <div className="relative mx-[5px] h-[17px] w-[69px] shrink-0">
        <svg viewBox="0 0 69 17" className="h-[17px] w-[69px]" fill="#333" aria-hidden="true">
          <path d="M0 5h69v1H0z" fill="#888" />
          <path d="M31 2h3v9h-3z" fill="#888" />
          {Array.from({ length: 12 }, (_, i) => (
            <rect key={i} x={2 + i * 6} y={13} width={1} height={3} />
          ))}
        </svg>
        <input type="range" aria-label="확대 비율" defaultValue={47} className="absolute inset-0 w-full opacity-0" />
      </div>
      <div className="flex shrink-0 items-center pl-[2px] text-[#555]">
        {drawTools.map((t) => (
          <button key={t.label} aria-label={t.label} className={clsx("flex h-[17px] w-[17px] items-center justify-center", t.label === "십자선" && "bg-white")}>
            <svg viewBox="0 0 16 16" className="size-4 shrink-0" fill="none" stroke="currentColor"><path d={t.d} /></svg>
          </button>
        ))}
        <button aria-label="돋보기" className="flex w-[17px] justify-center"><Search className="size-[14px]" strokeWidth={2} /></button>
        <button aria-label="축소" className="flex w-[17px] justify-center"><Minus className="size-3" strokeWidth={4} /></button>
        <button aria-label="확대" className="flex w-[17px] justify-center"><Plus className="size-3" strokeWidth={4} /></button>
        <button aria-label="글자 크기" className="w-[17px] text-[14px] leading-none font-bold">A</button>
      </div>
    </div>
  )
}

export default function App() {
  return (
    <main className="flex min-h-screen flex-col bg-[#f0f0f0] font-['Liberation_Sans','Noto_Sans_CJK_KR',sans-serif] text-black">
      <header className="bg-[#d0d0d0] px-[3px] pt-[5px] pb-[3px]">
        <Toolbar />
        <QuoteBar />
      </header>
      <section className="mx-[3px] border border-[#808080] bg-white">
        <PricePane />
        <VolumePane />
        <HoldingsPane />
        <DateAxis />
      </section>
      <footer className="pl-[3px]">
        <BottomBar />
      </footer>
    </main>
  )
}
